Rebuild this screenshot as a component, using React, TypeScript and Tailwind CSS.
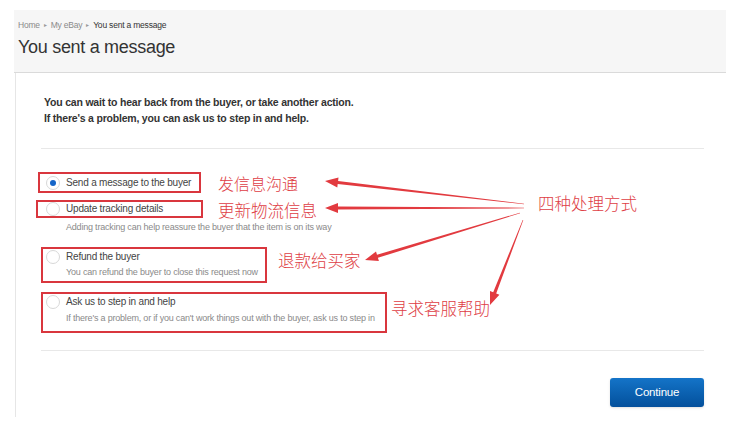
import React from 'react';

interface Arrow {
  from: [number, number];
  to: [number, number];
}

const ARROWS: Arrow[] = [
  { from: [524, 204], to: [325, 181] },
  { from: [524, 208], to: [325, 208] },
  { from: [520, 213], to: [365, 260] },
  { from: [523, 220], to: [490, 305] },
];

// tapered annotation arrow: thin at the tail, wide at the head
const arrowPoints = ({ from, to }: Arrow) => {
  const [x1, y1] = from;
  const [x2, y2] = to;
  const len = Math.hypot(x2 - x1, y2 - y1);
  const ux = (x2 - x1) / len;
  const uy = (y2 - y1) / len;
  const nx = -uy;
  const ny = ux;
  const head = 13;
  const bx = x2 - ux * head;
  const by = y2 - uy * head;
  const p = (x: number, y: number) => `${x.toFixed(1)},${y.toFixed(1)}`;
  const body = [
    p(x1 + nx * 0.3, y1 + ny * 0.3),
    p(bx + nx * 1.6, by + ny * 1.6),
    p(bx + nx * 5, by + ny * 5),
    p(x2, y2),
    p(bx - nx * 5, by - ny * 5),
    p(bx - nx * 1.6, by - ny * 1.6),
    p(x1 - nx * 0.3, y1 - ny * 0.3),
  ];
  return body.join(' ');
};

const Radio: React.FC<{ checked?: boolean }> = ({ checked }) => (
  <span className="w-[14px] h-[14px] rounded-full border border-[#d8d8d8] bg-white flex items-center justify-center shrink-0">
    {checked && <span className="w-[6px] h-[6px] rounded-full bg-[#1565c8]" />}
  </span>
);

export default function App() {
  return (
    <div className="relative w-[736px] h-[436px] bg-white overflow-hidden font-['Liberation_Sans',Arial,sans-serif]">
      <div className="pt-[10px] pl-[14px] pr-[10px]">
        {/* Header */}
        <div className="h-[63px] bg-[#f6f6f6] border-b border-[#dadada] pl-[4px] pt-[9px]">
          <div className="flex items-center gap-[4px] text-[8.5px] leading-[12px] tracking-[-0.2px]">
            <span className="text-[#8a8a8a]">Home</span>
            <span className="text-[#9a9a9a] text-[6px]">▸</span>
            <span className="text-[#8a8a8a]">My eBay</span>
            <span className="text-[#9a9a9a] text-[6px]">▸</span>
            <span className="text-[#333]">You sent a message</span>
          </div>
          <h1 className="mt-[5px] text-[18px] leading-[22px] text-[#333] tracking-[-0.3px]">You sent a message</h1>
        </div>

        {/* Card */}
        <div className="h-[344px] border-l border-[#e6e6e6] ml-[1px] pl-[25px] pr-[22px] pt-[21px]">
          <div className="pl-[3px] text-[10.5px] leading-[16px] font-bold text-[#333] tracking-[-0.2px]">
            <p>You can wait to hear back from the buyer, or take another action.</p>
            <p>If there's a problem, you can ask us to step in and help.</p>
          </div>
          <div className="mt-[22px] border-t border-[#e8e8e8]" />

          <div className="mt-[23px] text-[10px] text-[#444] tracking-[-0.2px]">
            <div className="ml-[-3px] w-[163px] h-[21px] border-2 border-[#d9363e] pl-[6px] flex items-center gap-[6px]">
              <Radio checked />
              <span className="leading-[14px]">Send a message to the buyer</span>
            </div>

            <div className="mt-[7px] ml-[-5px] w-[167px] h-[18px] border-2 border-[#d9363e] pl-[8px] flex items-center gap-[6px]">
              <Radio />
              <span className="leading-[14px]">Update tracking details</span>
            </div>
            <p className="mt-[2px] pl-[25px] text-[9px] leading-[14px] text-[#8a8a8a]">
              Adding tracking can help reassure the buyer that the item is on its way
            </p>

            <div className="mt-[13px] w-[226px] h-[36px] border-2 border-[#d9363e] pl-[3px] pt-[1px] flex gap-[6px]">
              <Radio />
              <div>
                <p className="leading-[14px]">Refund the buyer</p>
                <p className="mt-[1px] text-[9px] leading-[14px] text-[#8a8a8a]">You can refund the buyer to close this request now</p>
              </div>
            </div>

            <div className="mt-[9px] w-[346px] h-[41px] border-2 border-[#d9363e] pl-[3px] pt-[1px] flex gap-[6px]">
              <Radio />
              <div>
                <p className="leading-[14px]">Ask us to step in and help</p>
                <p className="mt-[2px] text-[9px] leading-[14px] text-[#8a8a8a]">If there's a problem, or if you can't work things out with the buyer, ask us to step in</p>
              </div>
            </div>
          </div>

          <div className="mt-[17px] border-t border-[#e8e8e8]" />

          <div className="mt-[27px] flex justify-end">
            <button className="w-[94px] h-[29px] rounded-[3px] bg-gradient-to-b from-[#1474c8] to-[#04509c] text-white text-[11.5px] tracking-[-0.2px] shadow-sm">
              Continue
            </button>
          </div>
        </div>
      </div>

      {/* Annotations */}
      <svg className="absolute inset-0 pointer-events-none" width="736" height="436">
        {ARROWS.map((a, i) => (
          <polygon key={i} points={arrowPoints(a)} fill="#e23a3f" />
        ))}
      </svg>
      <div className="absolute inset-0 pointer-events-none font-['Noto_Sans_CJK_SC',sans-serif] font-light text-[#de3d44]">
        <span className="absolute left-[218px] top-[172px] text-[16px] leading-[22px]">发信息沟通</span>
        <span className="absolute left-[218px] top-[199px] text-[16.5px] leading-[22px]">更新物流信息</span>
        <span className="absolute left-[278px] top-[249px] text-[16.5px] leading-[22px]">退款给买家</span>
        <span className="absolute left-[391px] top-[297px] text-[16.5px] leading-[22px]">寻求客服帮助</span>
        <span className="absolute left-[538px] top-[192px] text-[16.5px] leading-[22px]">四种处理方式</span>
      </div>
    </div>
  );
}
